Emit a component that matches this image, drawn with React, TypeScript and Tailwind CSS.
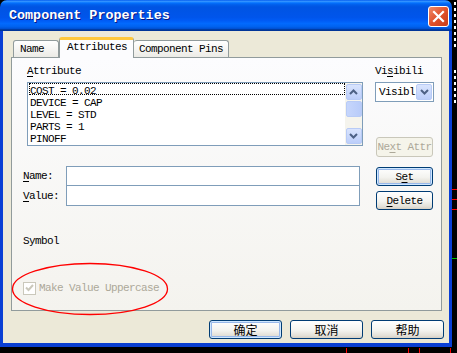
import React from 'react'

// XP-style "Component Properties" dialog
const MONO = "font-['Liberation_Mono',monospace] text-[11px] tracking-[-0.6px] leading-[14px]"
const CJK = "font-['Noto_Sans_CJK_SC','Liberation_Sans',sans-serif] text-[12px]"
const BTN =
  'rounded-[3px] border border-[#003c74] bg-[linear-gradient(to_bottom,#ffffff,#f3f3ef_55%,#e3e0d8_85%,#d6d0c5)] text-black flex items-center justify-center'
const FOCUS = 'shadow-[inset_0_0_0_1px_#cee7ff,inset_0_0_0_2px_#98b8ea]'
const SCROLLBTN =
  'w-[16px] h-[16px] rounded-[2px] border border-[#b8cbf6] bg-[linear-gradient(to_bottom,#d9e4fd,#bccefa)] flex items-center justify-center'

function U({ children }: { children: React.ReactNode }) {
  return <span className="underline underline-offset-[2px] decoration-[1px]">{children}</span>
}

function Chevron({ up = false }: { up?: boolean }) {
  return (
    <svg width="9" height="6" viewBox="0 0 9 6">
      <path d={up ? 'M1 5 L4.5 1.5 L8 5' : 'M1 1 L4.5 4.5 L8 1'} fill="none" stroke="#4d6185" strokeWidth="2" />
    </svg>
  )
}

const list = ['COST = 0.02', 'DEVICE = CAP', 'LEVEL = STD', 'PARTS = 1', 'PINOFF']
const whiteMarks = [2, 8, 14, 20, 26, 32, 38, 44, 70, 76, 82, 88, 94, 100]

export default function App() {
  return (
    <div className="relative w-[457px] h-[353px] bg-black overflow-hidden">
      {/* window */}
      <div className="w-[452px] h-[347px] flex flex-col rounded-t-[7px] overflow-hidden">
        {/* title bar */}
        <div className="h-[31px] shrink-0 flex justify-between bg-[linear-gradient(to_bottom,#0058ee_0%,#3593ff_4%,#288eff_6%,#127dff_8%,#036ffc_10%,#0262ee_14%,#0057e5_20%,#0054e3_24%,#0055eb_56%,#005bf5_66%,#026afe_76%,#0062ef_86%,#0052d6_92%,#0040ab_94%,#003092_100%)]">
          <div className="pl-[9px] pt-[8px] font-['Liberation_Mono',monospace] font-bold text-[13.4px] leading-[16px] text-white [text-shadow:1px_1px_0_#0a1883]">
            Component Properties
          </div>
          <div className="mt-[6px] mr-[3px] w-[21px] h-[21px] rounded-[3px] border border-white bg-[linear-gradient(135deg,#f08a68,#e0522c_50%,#c83c18)] flex items-center justify-center">
            <svg width="13" height="13" viewBox="0 0 13 13">
              <path d="M2 2 L11 11 M11 2 L2 11" stroke="white" strokeWidth="2.2" strokeLinecap="square" />
            </svg>
          </div>
        </div>

        {/* body */}
        <div className="flex-1 flex flex-col bg-[#ece9d8] border-x-[3px] border-b-[4px] border-[#0a3fd4]">
          <div className="pt-[6px]">
            {/* tabs */}
            <div className={`flex items-end h-[20px] ml-[10px] relative z-10 ${MONO} text-black`}>
              <div className="h-[17px] w-[46px] pl-[6px] pt-[1px] border border-b-0 border-[#919b9c] rounded-t-[3px] bg-[linear-gradient(to_bottom,#ffffff,#ecebe6)]">
                Name
              </div>
              <div className="h-[21px] w-[75px] -mb-[1px] pl-[7px] bg-[#fcfcfe] border-x border-[#919b9c] border-t-[3px] border-t-[#ffc83c] rounded-t-[3px]">
                Attributes
              </div>
              <div className="h-[17px] w-[95px] pl-[5px] pt-[1px] border border-b-0 border-l-0 border-[#919b9c] rounded-t-[3px] bg-[linear-gradient(to_bottom,#ffffff,#ecebe6)]">
                Component Pins
              </div>
            </div>

            {/* panel */}
            <div className={`ml-[8px] w-[431px] h-[254px] border border-[#919b9c] bg-[linear-gradient(to_bottom,#fcfcfe,#f4f3ee)] flex flex-col ${MONO} text-black`}>
              {/* attribute section */}
              <div className="flex pt-[6px] pl-[15px]">
                <div className="w-[336px]">
                  <div className="h-[14px] mb-[4px]">
                    <U>A</U>ttribute
                  </div>
                  <div className="h-[64px] border border-[#7f9db9] bg-white flex">
                    <div className="flex-1 pl-[1px]">
                      {list.map((t, i) => (
                        <div
                          key={t}
                          className={`h-[12px] leading-[16px] pl-[1px] ${i === 0 ? 'outline-1 outline-dotted outline-black -outline-offset-1' : ''}`}
                        >
                          {t}
                        </div>
                      ))}
                    </div>
                    <div className="w-[17px] bg-[#f5f4ed] flex flex-col items-center py-[1px]">
                      <div className={SCROLLBTN}>
                        <Chevron up />
                      </div>
                      <div className="w-[16px] h-[16px] mt-[1px] rounded-[2px] border border-[#b8cbf6] bg-[linear-gradient(to_right,#c6d6fc,#b8cbf9)]" />
                      <div className="flex-1" />
                      <div className={SCROLLBTN}>
                        <Chevron />
                      </div>
                    </div>
                  </div>
                </div>
                <div className="ml-[12px] w-[59px] flex flex-col">
                  <div className="h-[14px] mb-[4px]">
                    Vi<U>s</U>ibili
                  </div>
                  <div className="h-[20px] border border-[#7f9db9] bg-white flex items-center">
                    <div className="flex-1 pl-[3px]">Visibl</div>
                    <div className="w-[16px] h-[16px] mr-[1px] rounded-[2px] border border-[#b8cbf6] bg-[linear-gradient(to_bottom,#d9e4fd,#bccefa)] flex items-center justify-center">
                      <Chevron />
                    </div>
                  </div>
                  <div className="mt-[35px] ml-[1px] w-[57px] h-[20px] rounded-[3px] border border-[#c9c7ba] bg-[#f5f4ea] text-[#aca899] flex items-center justify-center">
                    Ne<U>x</U>t Attr
                  </div>
                </div>
              </div>

              {/* name / value */}
              <div className="flex mt-[9px] pl-[11px]">
                <div className="w-[43px]">
                  <div className="h-[20px] flex items-center">
                    <U>N</U>ame:
                  </div>
                  <div className="h-[20px] flex items-center">
                    <U>V</U>alue:
                  </div>
                </div>
                <div className="w-[294px]">
                  <div className="h-[20px] border border-[#7f9db9] bg-white" />
                  <div className="h-[21px] -mt-[1px] border border-[#7f9db9] bg-white" />
                </div>
                <div className="ml-[16px] w-[57px] pt-[1px] flex flex-col gap-[5px]">
                  <div className={`h-[19px] ${BTN} ${FOCUS}`}>
                    S<U>e</U>t
                  </div>
                  <div className={`h-[19px] ${BTN}`}>
                    <U>D</U>elete
                  </div>
                </div>
              </div>

              <div className="pl-[11px] mt-[24px] h-[14px]">Symbol</div>

              <div className="pl-[11px] mt-[33px] flex items-center gap-[3px] text-[#aca899]">
                <div className="w-[13px] h-[13px] border border-[#cac8bb] bg-white flex items-center justify-center">
                  <svg width="9" height="8" viewBox="0 0 9 8">
                    <path d="M1 3.5 L3.5 6 L8 1" fill="none" stroke="#cac8bb" strokeWidth="2" />
                  </svg>
                </div>
                <span>Make Value Uppercase</span>
              </div>
            </div>
          </div>

          {/* dialog buttons */}
          <div className={`flex justify-end gap-[8px] pr-[5px] mt-[9px] ${CJK}`}>
            <div className={`w-[73px] h-[19px] ${BTN} ${FOCUS}`}>确定</div>
            <div className={`w-[73px] h-[19px] ${BTN}`}>取消</div>
            <div className={`w-[73px] h-[19px] ${BTN}`}>帮助</div>
          </div>
        </div>
      </div>

      {/* red annotation ellipse */}
      <svg className="absolute left-[11px] top-[262px]" width="158" height="54" viewBox="0 0 158 54">
        <ellipse cx="79" cy="27" rx="77.5" ry="25.5" fill="none" stroke="#ff0000" strokeWidth="1.3" />
      </svg>

      {/* schematic behind the window */}
      {whiteMarks.map(y => (
        <div key={y} className="absolute left-[454px] w-[2px] h-[3px] bg-white" style={{ top: y }} />
      ))}
      {[189, 199, 209].map(y => (
        <div key={y} className="absolute left-[452px] w-[5px] h-[1px] bg-[#ff0000]" style={{ top: y }} />
      ))}
      <div className="absolute left-[452px] top-[258px] w-[5px] h-[1px] bg-[#00c000]" />
      {[346, 408, 419, 450].map(x => (
        <div key={x} className="absolute top-[348px] w-[1px] h-[5px] bg-[#ff0000]" style={{ left: x }} />
      ))}
    </div>
  )
}
